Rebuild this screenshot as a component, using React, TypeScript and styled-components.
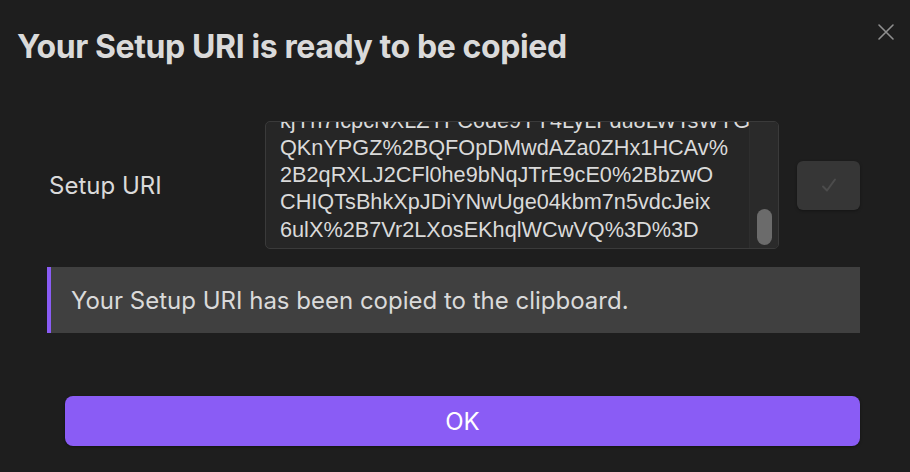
import React from "react";
import styled, { createGlobalStyle } from "styled-components";

const COLOR = {
  bg: "#1e1e1e",
  text: "#dadada",
  muted: "#8f8f8f",
  field: "#262626",
  fieldBorder: "#3a3a3a",
  callout: "#404040",
  accent: "#8a5cf5",
  button: "#363636",
};

const FONT = `Inter, "Liberation Sans", sans-serif`;

const GlobalStyle = createGlobalStyle`
  html, body {
    margin: 0;
    padding: 0;
    background: ${COLOR.bg};
    width: 910px;
    height: 472px;
    overflow: hidden;
  }
  body {
    font-family: ${FONT};
    color: ${COLOR.text};
  }
`;

const Modal = styled.div`
  width: 910px;
  height: 472px;
  box-sizing: border-box;
  position: relative;
  display: flex;
  flex-direction: column;
  padding: 27px 50px 0 17px;
`;

const CloseButton = styled.div`
  position: absolute;
  top: 22px;
  right: 14px;
  width: 20px;
  height: 20px;
  color: ${COLOR.muted};
  display: flex;
  align-items: center;
  justify-content: center;
`;

const Title = styled.h1`
  margin: 0;
  font-size: 32px;
  line-height: 40px;
  font-weight: 700;
  letter-spacing: -0.4px;
  color: ${COLOR.text};
`;

const SettingRow = styled.div`
  display: flex;
  flex-direction: row;
  align-items: center;
  margin-top: 54px;
  padding-left: 32px;
`;

const SettingName = styled.div`
  width: 216px;
  font-size: 24px;
  font-weight: 400;
`;

const Field = styled.div`
  width: 514px;
  height: 128px;
  box-sizing: border-box;
  border: 1px solid ${COLOR.fieldBorder};
  border-radius: 5px;
  background: ${COLOR.field};
  display: flex;
  flex-direction: row;
  overflow: hidden;
`;

const FieldText = styled.div`
  flex: 1;
  display: flex;
  flex-direction: column;
  justify-content: flex-end;
  overflow: hidden;
  padding: 0 0 5px 14px;
  font-family: "Liberation Sans", Arial, sans-serif;
  font-size: 21.7px;
  line-height: 27.3px;
  white-space: nowrap;
`;

const Scrollbar = styled.div`
  width: 28px;
  border-left: 1px solid #2e2e2e;
  background: #2a2a2a;
  display: flex;
  flex-direction: column;
  justify-content: flex-end;
  align-items: center;
  padding-bottom: 3px;
`;

const ScrollThumb = styled.div`
  width: 15px;
  height: 36px;
  border-radius: 8px;
  background: #6b6b6b;
`;

const CheckButton = styled.div`
  width: 63px;
  height: 49px;
  margin-left: 18px;
  border-radius: 6px;
  background: ${COLOR.button};
  box-shadow: 0 1px 3px rgba(0, 0, 0, 0.35);
  display: flex;
  align-items: center;
  justify-content: center;
`;

const Callout = styled.div`
  margin: 18px 0 0 30px;
  height: 66px;
  box-sizing: border-box;
  border-left: 4px solid ${COLOR.accent};
  background: ${COLOR.callout};
  display: flex;
  align-items: center;
  padding-left: 20px;
  font-size: 24px;
`;

const OkButton = styled.button`
  margin: 63px 0 0 48px;
  height: 50px;
  border: none;
  border-radius: 8px;
  background: ${COLOR.accent};
  color: #ffffff;
  font-family: ${FONT};
  font-size: 24px;
  box-shadow: 0 1px 3px rgba(0, 0, 0, 0.4);
`;

const LINES = [
  "kjYh7IcpcNXLZYFC6de9YY4LyLFdu8LWTsWYG",
  "QKnYPGZ%2BQFOpDMwdAZa0ZHx1HCAv%",
  "2B2qRXLJ2CFl0he9bNqJTrE9cE0%2BbzwO",
  "CHIQTsBhkXpJDiYNwUge04kbm7n5vdcJeix",
  "6ulX%2B7Vr2LXosEKhqlWCwVQ%3D%3D",
];

export default function App() {
  return (
    <>
      <GlobalStyle />
      <Modal>
        <CloseButton>
          <svg width="18" height="18" viewBox="0 0 18 18" fill="none">
            <path d="M2 2L16 16M16 2L2 16" stroke="currentColor" strokeWidth="1.6" strokeLinecap="round" />
          </svg>
        </CloseButton>
        <Title>Your Setup URI is ready to be copied</Title>
        <SettingRow>
          <SettingName>Setup URI</SettingName>
          <Field>
            <FieldText>
              {LINES.map((l) => (
                <div key={l}>{l}</div>
              ))}
            </FieldText>
            <Scrollbar>
              <ScrollThumb />
            </Scrollbar>
          </Field>
          <CheckButton>
            <svg width="22" height="22" viewBox="0 0 22 22" fill="none">
              <path d="M5 12.5L9 16.5L17 5.5" stroke="#4c4c4c" strokeWidth="2" strokeLinecap="round" strokeLinejoin="round" />
            </svg>
          </CheckButton>
        </SettingRow>
        <Callout>Your Setup URI has been copied to the clipboard.</Callout>
        <OkButton>OK</OkButton>
      </Modal>
    </>
  );
}
